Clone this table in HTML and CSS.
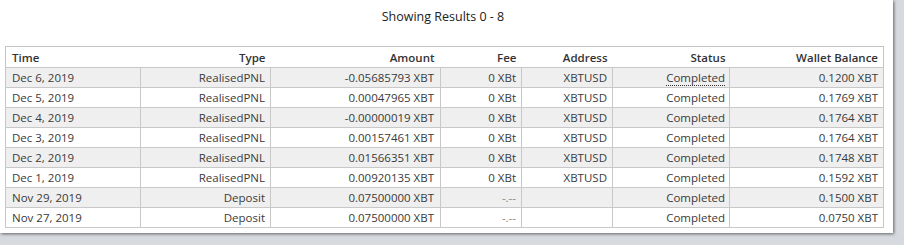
FILE: index.html
```html
<!DOCTYPE html>
<html>
<head>
<meta charset="utf-8">
<link rel="stylesheet" href="styles.css">
</head>
<body>
<div class="panel">
  <div class="title">Showing Results 0 - 8</div>
  <table class="grid">
    <colgroup>
      <col class="c-time"><col class="c-type"><col class="c-amount"><col class="c-fee"><col class="c-addr"><col class="c-status"><col class="c-bal">
    </colgroup>
    <thead>
      <tr><th class="left">Time</th><th>Type</th><th>Amount</th><th>Fee</th><th>Address</th><th>Status</th><th>Wallet Balance</th></tr>
    </thead>
    <tbody>
      <tr><td class="left">Dec 6, 2019</td><td>RealisedPNL</td><td>-0.05685793 XBT</td><td>0 XBt</td><td>XBTUSD</td><td><span class="tip">Completed</span></td><td>0.1200 XBT</td></tr>
      <tr><td class="left">Dec 5, 2019</td><td>RealisedPNL</td><td>0.00047965 XBT</td><td>0 XBt</td><td>XBTUSD</td><td>Completed</td><td>0.1769 XBT</td></tr>
      <tr><td class="left">Dec 4, 2019</td><td>RealisedPNL</td><td>-0.00000019 XBT</td><td>0 XBt</td><td>XBTUSD</td><td>Completed</td><td>0.1764 XBT</td></tr>
      <tr><td class="left">Dec 3, 2019</td><td>RealisedPNL</td><td>0.00157461 XBT</td><td>0 XBt</td><td>XBTUSD</td><td>Completed</td><td>0.1764 XBT</td></tr>
      <tr><td class="left">Dec 2, 2019</td><td>RealisedPNL</td><td>0.01566351 XBT</td><td>0 XBt</td><td>XBTUSD</td><td>Completed</td><td>0.1748 XBT</td></tr>
      <tr><td class="left">Dec 1, 2019</td><td>RealisedPNL</td><td>0.00920135 XBT</td><td>0 XBt</td><td>XBTUSD</td><td>Completed</td><td>0.1592 XBT</td></tr>
      <tr><td class="left">Nov 29, 2019</td><td>Deposit</td><td>0.07500000 XBT</td><td class="muted">-.--</td><td></td><td>Completed</td><td>0.1500 XBT</td></tr>
      <tr><td class="left">Nov 27, 2019</td><td>Deposit</td><td>0.07500000 XBT</td><td class="muted">-.--</td><td></td><td>Completed</td><td>0.0750 XBT</td></tr>
    </tbody>
  </table>
</div>
</body>
</html>
```
FILE: styles.css
```css
html, body {
  margin: 0;
  padding: 0;
}
body {
  background: #d6dadf;
  font-family: "Open Sans", "Liberation Sans", sans-serif;
  color: #333;
  height: 245px;
  overflow: hidden;
}
.panel {
  width: 893px;
  height: 233px;
  background: #fff;
  box-shadow: 1px 1px 3px rgba(0, 0, 0, 0.55);
  padding-top: 8px;
  box-sizing: border-box;
}
.title {
  text-align: center;
  font-size: 12.5px;
  line-height: 18px;
  height: 38px;
  padding-right: 7px;
  color: #222;
}
.grid {
  margin-left: 5px;
  width: 878px;
  border-collapse: collapse;
  table-layout: fixed;
  font-size: 11.5px;
  border: 1px solid #c4c4c4;
}
.c-time { width: 135px; }
.c-type { width: 130px; }
.c-amount { width: 170px; }
.c-fee { width: 81px; }
.c-addr { width: 91px; }
.c-status { width: 117px; }
.c-bal { width: 154px; }
.grid th {
  font-weight: 600;
  font-size: 11.5px;
  text-align: right;
  height: 20px;
  padding: 0 5px;
  color: #333;
  white-space: nowrap;
}
.grid td {
  text-align: right;
  height: 19px;
  padding: 0 5px;
  border: 1px solid #c8c8c8;
  white-space: nowrap;
  color: #3a3a3a;
}
.grid th:nth-child(3),
.grid td:nth-child(3) {
  padding-right: 6px;
}
.grid th:nth-child(6),
.grid td:nth-child(6) {
  padding-right: 4px;
}
.grid .left {
  text-align: left;
  padding-left: 6px;
}
.grid tbody tr:nth-child(odd) td {
  background: #efefef;
}
.grid td.muted {
  color: #888;
}
.tip {
  border-bottom: 1px dotted #333;
}
```
